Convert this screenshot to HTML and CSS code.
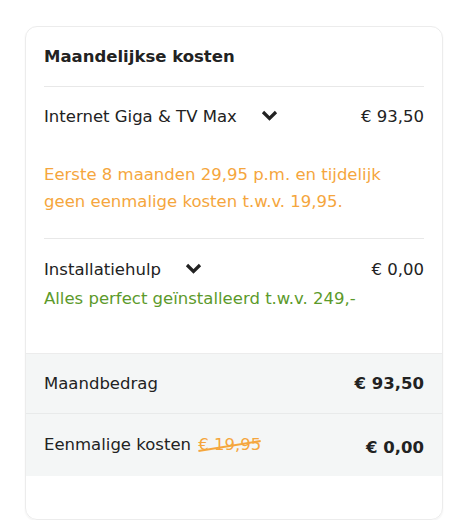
FILE: index.html
```html
<!DOCTYPE html>
<html lang="nl">
<head>
  <meta charset="UTF-8" />
  <meta name="viewport" content="width=device-width, initial-scale=1.0" />
  <title>Maandelijkse kosten</title>
  <link rel="stylesheet" href="styles.css">
</head>
<body>
  <div class="card">
    <div class="card-body">
      <h2 class="card-title">Maandelijkse kosten</h2>

      <div class="item">
        <div class="item-row">
          <span class="item-name">Internet Giga &amp; TV Max
            <svg class="chevron" width="17" height="11" viewBox="0 0 17 11"><path d="M2 2 L8.5 8.5 L15 2" fill="none" stroke="#222" stroke-width="3.2"/></svg>
          </span>
          <span class="item-price">€ 93,50</span>
        </div>
        <p class="note note-orange">Eerste 8 maanden 29,95 p.m. en tijdelijk geen eenmalige kosten t.w.v. 19,95.</p>
      </div>

      <div class="item item-last">
        <div class="item-row">
          <span class="item-name">Installatiehulp
            <svg class="chevron" width="17" height="11" viewBox="0 0 17 11"><path d="M2 2 L8.5 8.5 L15 2" fill="none" stroke="#222" stroke-width="3.2"/></svg>
          </span>
          <span class="item-price">€ 0,00</span>
        </div>
        <p class="note note-green">Alles perfect geïnstalleerd t.w.v. 249,-</p>
      </div>
    </div>

    <div class="totals">
      <div class="total-row">
        <span>Maandbedrag</span>
        <strong>€ 93,50</strong>
      </div>
      <div class="total-row">
        <span class="once-label">Eenmalige kosten <s class="old-price">€ 19,95</s></span>
        <strong class="total-once">€ 0,00</strong>
      </div>
    </div>
  </div>
</body>
</html>
```

FILE: styles.css
```css
body {
  margin: 0;
  padding: 26px 32px 0 25px;
  font-family: "DejaVu Sans", Verdana, sans-serif;
  font-size: 16.5px;
  color: #222;
  background: #fff;
}
.card {
  border: 1px solid #ececec;
  border-radius: 12px;
  box-shadow: 0 1px 2px rgba(0, 0, 0, 0.06);
  height: 494px;
  box-sizing: border-box;
  overflow: hidden;
}
.card-body {
  padding: 0 18px;
}
.card-title {
  margin: 0;
  font-size: 16.5px;
  font-weight: bold;
  line-height: 20px;
  padding: 20px 0 19px;
  border-bottom: 1px solid #e8e8e8;
}
.item {
  padding: 19px 0 23px;
  border-bottom: 1px solid #e8e8e8;
}
.item-last {
  border-bottom: none;
  padding: 20px 0 41px;
}
.item-row {
  display: flex;
  justify-content: space-between;
  align-items: center;
  line-height: 22px;
}
.item-name {
  display: flex;
  align-items: center;
  gap: 24px;
}
.chevron {
  margin-top: -3px;
}
.note {
  margin: 0;
  line-height: 27px;
}
.note-orange {
  color: #f5a63d;
  margin-top: 33px;
}
.note-green {
  color: #5c9a2b;
  margin-top: 4px;
}
.totals {
  background: #f4f6f6;
  border-top: 1px solid #ececec;
}
.total-row {
  display: flex;
  justify-content: space-between;
  align-items: center;
  padding: 0 18px;
  height: 59px;
}
.total-row + .total-row {
  border-top: 1px solid #e8eaea;
  height: 62px;
}
.total-row strong {
  font-size: 16.5px;
}
.once-label {
  margin-top: -2px;
}
.total-once {
  margin-top: 4px;
}
.old-price {
  position: relative;
  color: #f5a63d;
  text-decoration: none;
  margin-left: 2px;
}
.old-price::after {
  content: "";
  position: absolute;
  left: 0;
  right: 0;
  top: 55%;
  height: 1.5px;
  background: #f5a63d;
  transform: rotate(-9deg);
}
```
